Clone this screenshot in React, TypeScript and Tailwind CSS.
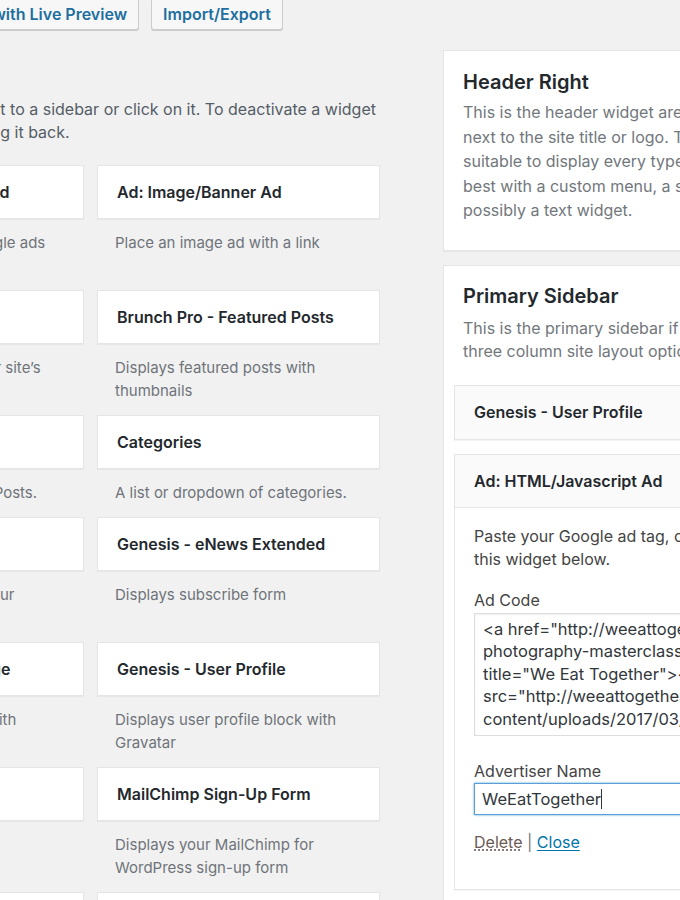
import React from 'react';

type Widget = { title: string; desc: string[] };

const widgets: Widget[] = [
  { title: 'Ad: HTML/Javascript Ad', desc: ['Place an ad tag, like Google ads', 'or other ad network code'] },
  { title: 'Ad: Image/Banner Ad', desc: ['Place an image ad with a link'] },
  { title: 'Archives', desc: ["A monthly archive of your site\u2019s", 'Posts.'] },
  { title: 'Brunch Pro - Featured Posts', desc: ['Displays featured posts with', 'thumbnails'] },
  { title: 'Calendar', desc: ["A calendar of your site\u2019s Posts."] },
  { title: 'Categories', desc: ['A list or dropdown of categories.'] },
  { title: 'Custom Menu', desc: ['Add a custom menu to your', 'sidebar.'] },
  { title: 'Genesis - eNews Extended', desc: ['Displays subscribe form'] },
  { title: 'Genesis - Featured Page', desc: ['Displays featured page with', 'thumbnails'] },
  { title: 'Genesis - User Profile', desc: ['Displays user profile block with', 'Gravatar'] },
  { title: 'Image', desc: ['Displays an image.'] },
  { title: 'MailChimp Sign-Up Form', desc: ['Displays your MailChimp for', 'WordPress sign-up form'] },
  { title: 'Meta', desc: ['Login, RSS, & WordPress.org links.'] },
  { title: 'Pages', desc: ['A list of your site\u2019s Pages.'] },
];

const adCode = [
  '<a href="http://weeattogether.com/food-',
  'photography-masterclass/" target="_blank"',
  'title="We Eat Together"><img',
  'src="http://weeattogether.com/wp-',
  'content/uploads/2017/03/banner.jpg" /></a>',
].join('\n');

function WidgetCard({ widget }: { widget: Widget }) {
  return (
    <div>
      <div className="h-[54px] flex items-center bg-white border border-[#e5e5e5] shadow-[0_1px_1px_rgba(0,0,0,0.04)] pl-[19px]">
        <h3 className="text-[16px] font-semibold text-[#23282d] whitespace-nowrap">{widget.title}</h3>
      </div>
      <p className="pt-[12px] pb-[13px] px-[18px] text-[15px] leading-[23px] text-[#6f747a]">
        {widget.desc.map((line, i) => (
          <span key={i} className="block whitespace-nowrap">{line}</span>
        ))}
      </p>
    </div>
  );
}

export default function App() {
  return (
    <div className="w-[680px] h-[900px] overflow-hidden bg-[#f1f1f1] font-['Inter','Liberation_Sans',sans-serif]">
      <div className="ml-[-199px] w-[900px]">
        <div className="flex items-center mt-[-2px] h-[32px]">
          <h1 className="w-[100px] mr-[13px] text-[23px] text-[#23282d]">Widgets</h1>
          <div className="flex gap-[12px]">
            <button className="h-[32px] px-[11px] bg-[#f7f7f7] border border-[#cccccc] rounded-[3px] shadow-[0_1px_0_#cccccc] text-[16px] font-semibold text-[#1e6fa0] whitespace-nowrap">
              Manage with Live Preview
            </button>
            <button className="h-[32px] px-[11px] bg-[#f7f7f7] border border-[#cccccc] rounded-[3px] shadow-[0_1px_0_#cccccc] text-[16px] font-semibold text-[#1e6fa0] whitespace-nowrap">
              Import/Export
            </button>
          </div>
        </div>

        <div className="flex gap-[63px]">
          <div className="w-[579px] shrink-0 pt-[20px]">
            <h2 className="h-[48px] text-[16px] font-semibold text-[#23282d]">Available Widgets</h2>
            <p className="text-[16px] leading-[23px] text-[#555d66] mb-[21px]">
              <span className="block whitespace-nowrap">
                To activate a widget drag it to a sidebar or click on it. To deactivate a widget
              </span>
              <span className="block whitespace-nowrap">and delete its settings, drag it back.</span>
            </p>
            <div className="grid grid-cols-2 gap-x-[13px]">
              {widgets.map((w) => (
                <WidgetCard key={w.title} widget={w} />
              ))}
            </div>
          </div>

          <div className="w-[320px] shrink-0 pt-[20px] flex flex-col gap-[14px]">
            <div className="bg-white border border-[#e5e5e5] shadow-[0_1px_1px_rgba(0,0,0,0.04)] pt-[18px] pb-[27px] px-[19px]">
              <h2 className="text-[20px] leading-[26px] font-semibold text-[#23282d]">Header Right</h2>
              <p className="mt-[5px] text-[16px] leading-[24.6px] text-[#72777c] whitespace-nowrap">
                <span className="block">This is the header widget area. It typically appears</span>
                <span className="block">next to the site title or logo. This widget area is not</span>
                <span className="block">suitable to display every type of widget, and works</span>
                <span className="block">best with a custom menu, a search form, or</span>
                <span className="block">possibly a text widget.</span>
              </p>
            </div>

            <div className="bg-white border border-[#e5e5e5] shadow-[0_1px_1px_rgba(0,0,0,0.04)] pt-[17px] pl-[10px] pb-[20px]">
              <h2 className="pl-[9px] text-[20px] leading-[26px] font-semibold text-[#23282d]">Primary Sidebar</h2>
              <p className="pl-[9px] mt-[8px] text-[16px] leading-[23px] text-[#72777c] whitespace-nowrap">
                <span className="block">This is the primary sidebar if you are using a two or</span>
                <span className="block">three column site layout option.</span>
              </p>

              <div className="mt-[22px] flex flex-col gap-[14px]">
                <div className="h-[55px] flex items-center pl-[19px] bg-[#fafafa] border border-[#e5e5e5] shadow-[0_1px_1px_rgba(0,0,0,0.04)]">
                  <h3 className="text-[16px] font-semibold text-[#23282d] whitespace-nowrap">Genesis - User Profile</h3>
                </div>

                <div className="border border-[#e5e5e5] shadow-[0_1px_1px_rgba(0,0,0,0.04)]">
                  <div className="h-[53px] flex items-center pl-[19px] bg-[#fafafa] border-b border-[#e5e5e5]">
                    <h3 className="text-[16px] font-semibold text-[#23282d] whitespace-nowrap">Ad: HTML/Javascript Ad</h3>
                  </div>
                  <div className="bg-white pl-[19px] pt-[17px] pb-[35px] text-[16px] text-[#444444]">
                    <p className="leading-[23px] whitespace-nowrap">
                      <span className="block">Paste your Google ad tag, or any other ad tag, into</span>
                      <span className="block">this widget below.</span>
                    </p>
                    <label className="block mt-[18px] leading-[23px]">Ad Code</label>
                    <textarea
                      readOnly
                      wrap="off"
                      value={adCode}
                      className="mt-[1px] block w-[320px] h-[123px] resize-none overflow-hidden border border-[#dddddd] shadow-[inset_0_1px_2px_rgba(0,0,0,0.07)] px-[8px] py-[4px] text-[16.5px] leading-[22.5px] text-[#32373c] whitespace-pre outline-none"
                    />
                    <label className="block mt-[24px] leading-[23px]">Advertiser Name</label>
                    <div className="flex items-center w-[320px] h-[32px] border border-[#5b9dd9] shadow-[0_0_2px_rgba(30,140,190,0.8)] px-[7px] text-[16.5px] text-[#32373c]">
                      <span>WeEatTogether</span>
                      <span className="w-px h-[20px] bg-[#32373c]" />
                    </div>
                    <div className="mt-[16px] leading-[23px]">
                      <a className="text-[#6b5a55] underline decoration-dotted underline-offset-2">Delete</a>
                      <span className="text-[#72777c]"> | </span>
                      <a className="text-[#0073aa] underline underline-offset-2">Close</a>
                    </div>
                  </div>
                </div>
              </div>
            </div>
          </div>
        </div>
      </div>
    </div>
  );
}
